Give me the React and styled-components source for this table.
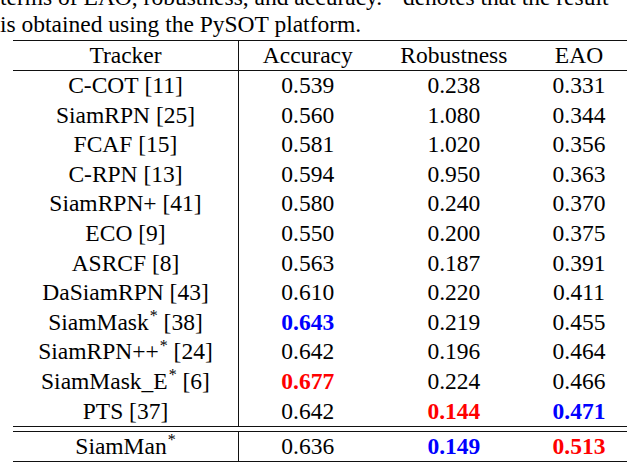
import React from 'react';
import styled, { createGlobalStyle } from 'styled-components';

const GlobalStyle = createGlobalStyle`
  html, body {
    margin: 0;
    padding: 0;
    background: #fff;
    overflow: hidden;
  }
  body, body * {
    font-family: "Liberation Serif", serif;
    color: #000;
  }
`;

const COLS = '226px 137.6px 154.6px 95.6px';

const Page = styled.div`
  width: 640px;
  height: 466px;
  overflow: hidden;
  font-size: 23.5px;
`;

const Caption = styled.div`
  margin-top: -16px;
  line-height: 27px;
  white-space: nowrap;
`;

const Table = styled.div`
  margin: 2px 0 0 13px;
  width: 614px;
  display: flex;
  flex-direction: column;
`;

const Rule = styled.div`
  height: 1px;
  background: #111;
`;

const DoubleRule = styled.div`
  display: flex;
  flex-direction: column;
  gap: 4px;
`;

const Row = styled.div`
  display: grid;
  grid-template-columns: ${COLS};
  height: ${p => p.$h}px;
  line-height: ${p => p.$h}px;
`;

const Cell = styled.div`
  text-align: center;
  white-space: nowrap;
  border-right: ${p => (p.$divider ? '1px solid #111' : '0')};
`;

const Value = styled.span`
  font-weight: ${p => (p.$color ? 700 : 400)};
  && {
    color: ${p => (p.$color === 'blue' ? '#0000ff' : p.$color === 'red' ? '#ff0000' : '#000')};
  }
`;

const Sup = styled.span`
  font-size: 0.68em;
  line-height: 0;
  position: relative;
  top: -0.55em;
  margin-left: 1px;
`;

const rows = [
  ['C-COT', false, '[11]', ['0.539'], ['0.238'], ['0.331']],
  ['SiamRPN', false, '[25]', ['0.560'], ['1.080'], ['0.344']],
  ['FCAF', false, '[15]', ['0.581'], ['1.020'], ['0.356']],
  ['C-RPN', false, '[13]', ['0.594'], ['0.950'], ['0.363']],
  ['SiamRPN+', false, '[41]', ['0.580'], ['0.240'], ['0.370']],
  ['ECO', false, '[9]', ['0.550'], ['0.200'], ['0.375']],
  ['ASRCF', false, '[8]', ['0.563'], ['0.187'], ['0.391']],
  ['DaSiamRPN', false, '[43]', ['0.610'], ['0.220'], ['0.411']],
  ['SiamMask', true, '[38]', ['0.643', 'blue'], ['0.219'], ['0.455']],
  ['SiamRPN++', true, '[24]', ['0.642'], ['0.196'], ['0.464']],
  ['SiamMask_E', true, '[6]', ['0.677', 'red'], ['0.224'], ['0.466']],
  ['PTS', false, '[37]', ['0.642'], ['0.144', 'red'], ['0.471', 'blue']],
];

const Name = ({ name, star, cite }) => (
  <>
    {name}
    {star && <Sup>*</Sup>}
    {cite && <>&nbsp;{cite}</>}
  </>
);

const DataRow = ({ row, h }) => {
  const [name, star, cite, ...vals] = row;
  return (
    <Row $h={h}>
      <Cell $divider>
        <Name name={name} star={star} cite={cite} />
      </Cell>
      {vals.map(([v, color], i) => (
        <Cell key={i}>
          <Value $color={color}>{v}</Value>
        </Cell>
      ))}
    </Row>
  );
};

export default function App() {
  return (
    <Page>
      <GlobalStyle />
      <Caption>
        <div>
          terms of EAO, robustness, and accuracy. <Sup>*</Sup> denotes that the result
        </div>
        <div>is obtained using the PySOT platform.</div>
      </Caption>
      <Table>
        <Rule />
        <Row $h={29}>
          <Cell $divider>Tracker</Cell>
          <Cell>Accuracy</Cell>
          <Cell>Robustness</Cell>
          <Cell>EAO</Cell>
        </Row>
        <Rule />
        {rows.map(r => (
          <DataRow key={r[0]} row={r} h={29.6} />
        ))}
        <DoubleRule>
          <Rule />
          <Rule />
        </DoubleRule>
        <DataRow row={['SiamMan', true, null, ['0.636'], ['0.149', 'blue'], ['0.513', 'red']]} h={29} />
        <Rule />
      </Table>
    </Page>
  );
}
